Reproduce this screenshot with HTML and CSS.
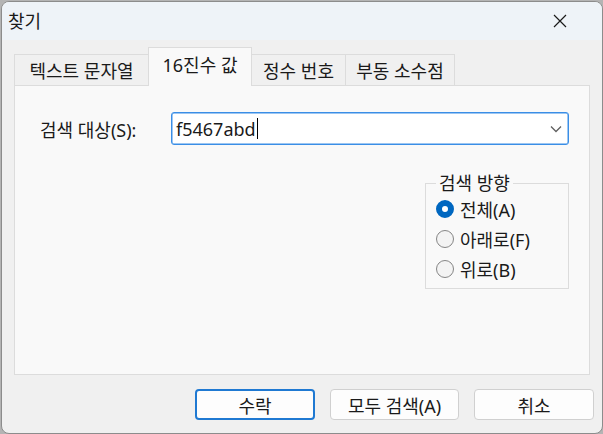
FILE: index.html
```html
<!DOCTYPE html>
<html lang="ko">
<head>
<meta charset="utf-8">
<link rel="stylesheet" href="styles.css">
</head>
<body>
<div class="window">
  <div class="titlebar">
    <span class="title">찾기</span>
    <svg class="close" width="14" height="14" viewBox="0 0 14 14"><path d="M1 1 L13 13 M13 1 L1 13" stroke="#1a1a1a" stroke-width="1.2" fill="none"/></svg>
  </div>
  <div class="content">
    <div class="tabs">
      <div class="tab t1">텍스트 문자열</div>
      <div class="tab active t2">16진수 값</div>
      <div class="tab t3">정수 번호</div>
      <div class="tab t4">부동 소수점</div>
    </div>
    <div class="panel">
      <div class="search-row">
        <label class="label">검색 대상(S):</label>
        <div class="combo">
          <span class="value">f5467abd</span><span class="caret"></span>
          <svg class="chev" width="12" height="8" viewBox="0 0 12 8"><path d="M1 1.5 L6 6.5 L11 1.5" stroke="#606060" stroke-width="1.3" fill="none"/></svg>
        </div>
      </div>
      <fieldset class="group">
        <legend>검색 방향</legend>
        <div class="radio-row"><span class="radio on"></span><span>전체(A)</span></div>
        <div class="radio-row"><span class="radio"></span><span>아래로(F)</span></div>
        <div class="radio-row"><span class="radio"></span><span>위로(B)</span></div>
      </fieldset>
    </div>
    <div class="buttons">
      <button class="btn default">수락</button>
      <button class="btn wide">모두 검색(A)</button>
      <button class="btn">취소</button>
    </div>
  </div>
</div>
</body>
</html>
```
FILE: styles.css
```css
html, body {
  margin: 0;
  padding: 0;
}
body {
  width: 603px;
  height: 434px;
  background: #b4b4b4;
  overflow: hidden;
  font-family: "Noto Sans", "Noto Sans CJK KR", sans-serif;
  font-size: 18px;
  color: #1a1a1a;
}
.window {
  margin: 1px 0 0 1px;
  width: 600px;
  height: 431px;
  border: 1px solid #8c8c8c;
  border-radius: 8px;
  background: #f0f0f0;
  overflow: hidden;
  display: flex;
  flex-direction: column;
}
.titlebar {
  height: 38px;
  background: #eef3f8;
  display: flex;
  align-items: center;
  justify-content: space-between;
  padding: 0 35px 0 6px;
  flex: none;
}
.title {
  font-size: 18px;
  line-height: 20px;
}
.close {
  display: block;
}
.content {
  padding: 7px 8px 0 12px;
  display: flex;
  flex-direction: column;
}
.tabs {
  display: flex;
  align-items: flex-end;
  height: 38px;
}
.tab {
  height: 31px;
  box-sizing: border-box;
  border: 1px solid #dcdcdc;
  border-bottom: none;
  background: #f0f0f0;
  display: flex;
  align-items: center;
  justify-content: center;
  font-size: 18px;
  margin-right: -1px;
}
.t1 { width: 135px; }
.t2 { width: 104px; }
.t3 { width: 95px; }
.t4 { width: 110px; }
.tab.active {
  height: 39px;
  background: #f9f9f9;
  border-color: #dcdcdc;
  padding-bottom: 6px;
  position: relative;
  z-index: 1;
  margin-bottom: -1px;
}
.panel {
  width: 576px;
  height: 290px;
  box-sizing: border-box;
  border: 1px solid #dcdcdc;
  background: #f9f9f9;
  padding: 26px 20px 0 25px;
  display: flex;
  flex-direction: column;
  align-items: flex-end;
}
.search-row {
  align-self: stretch;
  display: flex;
  align-items: center;
}
.label {
  width: 131px;
  flex: none;
  font-size: 18px;
}
.combo {
  flex: 1;
  height: 33px;
  box-sizing: border-box;
  border: 1px solid #3a8ee6;
  border-radius: 3px;
  background: #fff;
  display: flex;
  align-items: center;
  padding: 0 6px 0 4px;
  box-shadow: inset 0 0 0 0.5px #3a8ee6;
}
.value {
  font-size: 18px;
}
.caret {
  width: 1px;
  height: 21px;
  background: #000;
  margin-left: 1px;
}
.chev {
  margin-left: auto;
  margin-right: 0;
}
.group {
  margin: 28px 0 0 0;
  width: 144px;
  height: 116px;
  box-sizing: border-box;
  border: 1px solid #dcdcdc;
  padding: 1px 0 0 10px;
}
.group legend {
  padding: 0 3px;
  margin-left: 0;
  font-size: 18px;
  line-height: 20px;
}
.radio-row {
  display: flex;
  align-items: center;
  height: 30px;
  gap: 6px;
  font-size: 18px;
}
.radio {
  width: 18px;
  height: 18px;
  box-sizing: border-box;
  border-radius: 50%;
  border: 1px solid #858585;
  background: #f3f3f3;
}
.radio.on {
  border: 6px solid #0067c0;
  background: #fff;
}
.buttons {
  display: flex;
  justify-content: flex-end;
  margin-top: 14px;
  gap: 15px;
}
.btn {
  width: 120px;
  height: 31px;
  border: 1px solid #d0d0d0;
  border-radius: 4px;
  background: #fdfdfd;
  font-family: inherit;
  font-size: 18px;
  color: #1a1a1a;
  padding: 0;
}
.btn.wide {
  width: 129px;
}
.btn.default {
  border: 2px solid #1f79d2;
}
```
